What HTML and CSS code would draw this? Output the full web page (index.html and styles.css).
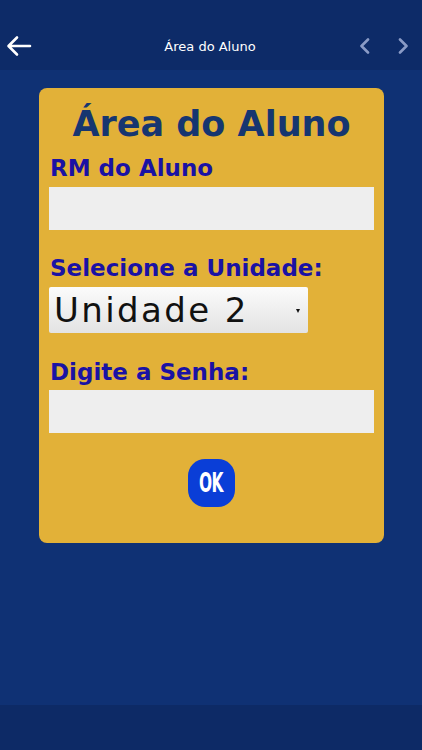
FILE: index.html
```html
<!doctype html>
<html lang="pt">
<head>
<meta charset="UTF-8">
<title>Área do Aluno</title>
<link rel="stylesheet" href="styles.css">
</head>
<body>
	<div class="topbar">
		<button class="bt_back">
			<svg width="26" height="22" viewBox="0 0 26 22"><path d="M24 11H3M11 2.5L2.5 11L11 19.5" fill="none" stroke="#fff" stroke-width="2.6" stroke-linecap="round" stroke-linejoin="round"/></svg>
		</button>
		<div class="top_title">Área do Aluno</div>
		<div class="nav">
			<svg width="14" height="16" viewBox="0 0 14 16"><path d="M10 1.5L3.5 8L10 14.5" fill="none" stroke="#8a9bc6" stroke-width="2.6" stroke-linecap="round" stroke-linejoin="round"/></svg>
			<svg width="14" height="16" viewBox="0 0 14 16"><path d="M4 1.5L10.5 8L4 14.5" fill="none" stroke="#8a9bc6" stroke-width="2.6" stroke-linecap="round" stroke-linejoin="round"/></svg>
		</div>
	</div>

	<div class="content">
		<div class="box">
			<h1 class="title">Área do Aluno</h1>
			<label class="lbl" for="rm">RM do Aluno</label>
			<input type="text" id="rm" class="txt">
			<label class="lbl lbl_unit" for="unidade">Selecione a Unidade:</label>
			<div class="sel_wrap">
				<select id="unidade" class="sel">
					<option>Unidade 1</option>
					<option selected>Unidade 2</option>
				</select>
			</div>
			<label class="lbl lbl_pass" for="senha">Digite a Senha:</label>
			<input type="password" id="senha" class="txt txt_pass">
			<button class="bt_ok"><span>OK</span></button>
		</div>
	</div>

	<div class="bottombar"></div>
</body>
</html>
```

FILE: styles.css
```css
html,body{
	margin:0;
	padding:0;
}
body{
	width:422px;
	height:750px;
	background:#0f3174;
	font-family:"DejaVu Sans",sans-serif;
	display:flex;
	flex-direction:column;
	overflow:hidden;
}
.topbar{
	height:70px;
	background:#0d2b68;
	display:flex;
	align-items:center;
	padding-top:22px;
	box-sizing:border-box;
}
.bt_back{
	width:40px;
	height:40px;
	margin-left:6px;
	padding:0;
	border:none;
	background:none;
	display:flex;
	align-items:center;
}
.top_title{
	flex:1;
	text-align:center;
	color:#fff;
	font-size:13px;
	margin-left:16px;
}
.nav{
	display:flex;
	gap:24px;
	margin-right:12px;
}
.content{
	flex:1;
	padding:18px 38px 0 39px;
}
.box{
	background:#e2b138;
	border-radius:8px;
	padding:0 10px 36px 10px;
	display:flex;
	flex-direction:column;
}
.title{
	margin:16px 0 0 0;
	height:40px;
	line-height:40px;
	text-align:center;
	font-size:35px;
	font-weight:bold;
	color:#163670;
}
.lbl{
	display:block;
	height:30px;
	line-height:30px;
	margin-top:9px;
	padding-left:1px;
	font-size:23px;
	font-weight:bold;
	color:#1a12a4;
}
.lbl_unit{
	margin-top:23px;
}
.lbl_pass{
	margin-top:24px;
}
.txt{
	display:block;
	width:100%;
	height:43px;
	margin-top:4px;
	border:none;
	background:#eeeeee;
	box-sizing:border-box;
}
.txt_pass{
	margin-top:3px;
}
.sel_wrap{
	position:relative;
	width:259px;
	height:46px;
	margin-top:4px;
}
.sel_wrap:after{
	content:"";
	position:absolute;
	right:8px;
	top:22px;
	border-left:2px solid transparent;
	border-right:2px solid transparent;
	border-top:4px solid #111;
}
.sel{
	-webkit-appearance:none;
	appearance:none;
	width:100%;
	height:46px;
	border:none;
	border-radius:2px;
	background:linear-gradient(#fbfbfb,#e3e3e3);
	padding:0 0 0 5px;
	font-family:"DejaVu Sans",sans-serif;
	font-size:34px;
	letter-spacing:2.4px;
	color:#111;
	box-sizing:border-box;
}
.bt_ok{
	align-self:center;
	width:47px;
	height:48px;
	margin-top:26px;
	border:none;
	border-radius:17px;
	background:#0a3ed7;
	color:#fff;
	font-family:"DejaVu Sans Condensed","DejaVu Sans",sans-serif;
	font-size:26px;
	font-weight:bold;
	padding:0;
}
.bt_ok span{
	display:inline-block;
	transform:scaleX(0.66);
	letter-spacing:-1px;
}
.bottombar{
	height:45px;
	background:#0d2a66;
}
```
